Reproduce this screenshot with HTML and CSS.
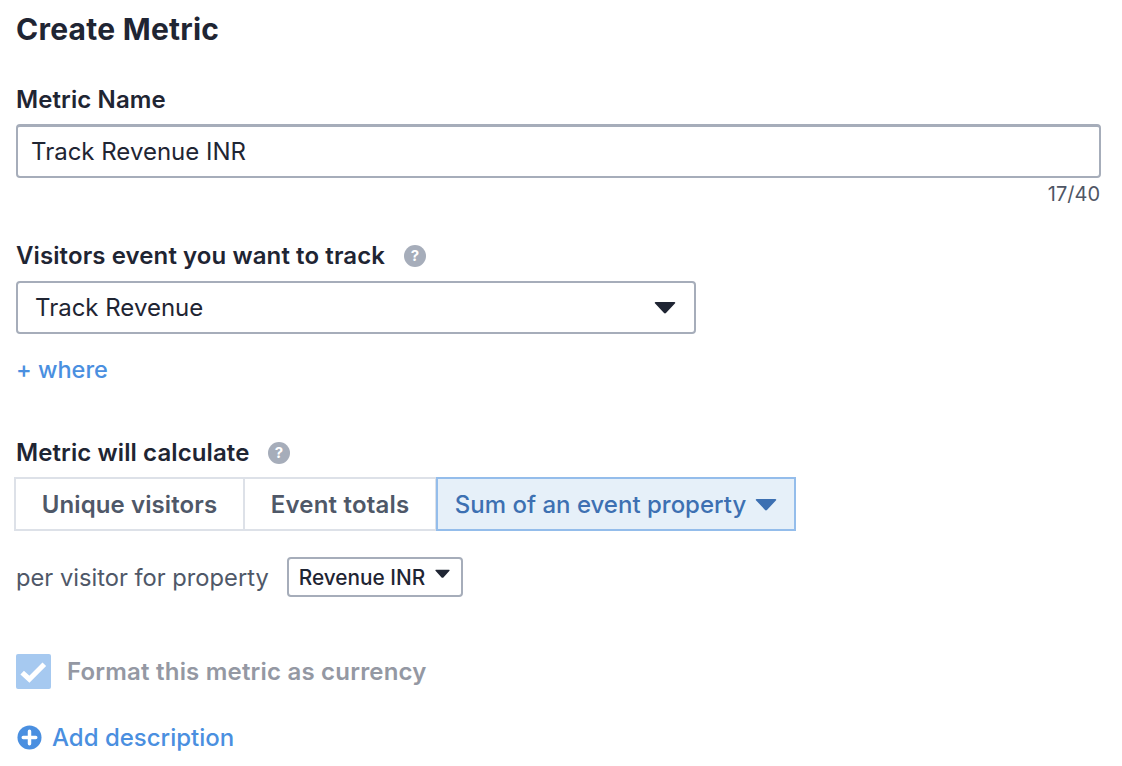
FILE: index.html
```html
<!DOCTYPE html>
<html lang="en">
<head>
<meta charset="utf-8">
<title>Create Metric</title>
<link rel="stylesheet" href="styles.css">
</head>
<body>
<main class="page">
  <h1 class="title">Create Metric</h1>

  <label class="label name-label">Metric Name</label>
  <div class="text-input">Track Revenue INR</div>
  <div class="counter">17/40</div>

  <div class="label help-row event-label">
    <span>Visitors event you want to track</span>
    <svg class="help" viewBox="0 0 22 22" aria-hidden="true"><circle cx="11" cy="11" r="11" fill="#a6adba"/><text x="11" y="16" text-anchor="middle" class="help-mark">?</text></svg>
  </div>
  <div class="select">
    <span>Track Revenue</span>
    <svg class="caret" viewBox="0 0 22 13" aria-hidden="true"><path d="M1.5 1h19a.8.8 0 0 1 .6 1.3l-8.9 9.4a1.6 1.6 0 0 1-2.4 0L.9 2.3A.8.8 0 0 1 1.5 1z" fill="#1f2533"/></svg>
  </div>
  <div class="where">+ where</div>

  <div class="label help-row calc-label">
    <span>Metric will calculate</span>
    <svg class="help" viewBox="0 0 22 22" aria-hidden="true"><circle cx="11" cy="11" r="11" fill="#a6adba"/><text x="11" y="16" text-anchor="middle" class="help-mark">?</text></svg>
  </div>
  <div class="tabs">
    <div class="tab tab-unique">Unique visitors</div>
    <div class="tab tab-totals">Event totals</div>
    <div class="tab tab-active">
      <span>Sum of an event property</span>
      <svg class="caret" viewBox="0 0 22 13" aria-hidden="true"><path d="M1.5 1h19a.8.8 0 0 1 .6 1.3l-8.9 9.4a1.6 1.6 0 0 1-2.4 0L.9 2.3A.8.8 0 0 1 1.5 1z" fill="#3d70b2"/></svg>
    </div>
  </div>

  <div class="property-row">
    <span class="property-text">per visitor for property</span>
    <div class="mini-select">
      <span>Revenue INR</span>
      <svg class="mini-caret" viewBox="0 0 16 10" aria-hidden="true"><path d="M1 .5h14a.6.6 0 0 1 .45 1L9 8.6a1.4 1.4 0 0 1-2 0L.55 1.5A.6.6 0 0 1 1 .5z" fill="#1f2533"/></svg>
    </div>
  </div>

  <div class="check-row">
    <span class="checkbox">
      <svg viewBox="0 0 34 34" aria-hidden="true"><path d="M6 18l7 6.5L27.5 10" fill="none" stroke="#fff" stroke-width="5"/></svg>
    </span>
    <span class="check-text">Format this metric as currency</span>
  </div>

  <div class="add-row">
    <svg class="plus" viewBox="0 0 26 26" aria-hidden="true"><circle cx="13" cy="13" r="12.5" fill="#4a8fe0"/><path d="M13 6.5v13M6.5 13h13" stroke="#fff" stroke-width="3.6" stroke-linecap="round"/></svg>
    <span>Add description</span>
  </div>
</main>
</body>
</html>
```

FILE: styles.css
```css
* { box-sizing: border-box; }
html, body { margin: 0; padding: 0; background: #fff; }
body {
  width: 1122px;
  height: 766px;
  overflow: hidden;
  font-family: "Inter", "Liberation Sans", sans-serif;
  color: #1f2533;
}
.page { padding: 0 21px 0 16px; display: flex; flex-direction: column; align-items: flex-start; }
.title { margin: 11px 0 0 0; font-size: 30px; line-height: 36px; font-weight: 700; letter-spacing: 0.25px; }
.label { font-size: 24px; line-height: 30px; font-weight: 600; display: block; margin-left: 0; letter-spacing: 0.1px; }
.name-label { margin-top: 38px; }
.text-input {
  width: 1085px; height: 54px; margin-top: 9px;
  border: 2px solid #a6adba; border-top-width: 3px; border-radius: 4px;
  padding-left: 13px; font-size: 24px; line-height: 49px;
}
.counter { width: 1085px; text-align: right; font-size: 20px; line-height: 28px; color: #4f5665; margin-top: 2px; padding-right: 1px; }
.help-row { display: flex; align-items: center; gap: 19px; }
.event-label { margin-top: 33px; }
.help { width: 22px; height: 22px; flex: none; }
.help-mark { font-size: 15px; font-weight: 700; fill: #fff; }
.select {
  width: 680px; height: 53px; margin-top: 10px;
  border: 2px solid #a6adba; border-radius: 4px;
  padding: 0 18px 0 17px; display: flex; align-items: center; justify-content: space-between;
  font-size: 24px;
}
.caret { width: 22px; height: 13px; flex: none; }
.where { margin: 21px 0 0 0; font-size: 23.5px; line-height: 30px; font-weight: 500; color: #4a8fe0; }
.calc-label { margin-top: 53px; }
.tabs { display: flex; margin: 9px 0 0 -2px; height: 54px; }
.tab {
  border: 2px solid #dde1e8; display: flex; align-items: center; justify-content: center;
  font-size: 24px; font-weight: 600; color: #4f5868; letter-spacing: 0.1px;
}
.tab-unique { width: 231px; }
.tab-totals { width: 194px; margin-left: -2px; letter-spacing: 0.2px; }
.tab-active {
  width: 360px; margin-left: -1px; gap: 9px; font-weight: 500; letter-spacing: 0;
  border-color: #94bdeb; background: #e6f0f9; color: #3d70b2;
}
.property-row { display: flex; align-items: center; gap: 18px; margin-top: 26px; }
.property-text { font-size: 23.7px; color: #4f5868; }
.mini-select {
  width: 176px; height: 40px; border: 2px solid #a6adba; border-radius: 4px;
  display: flex; align-items: center; gap: 10px; padding-left: 10px; font-size: 20.8px; font-weight: 500;
}
.mini-caret { width: 15px; height: 10px; flex: none; margin-top: -6px; }
.check-row { display: flex; align-items: center; gap: 16px; margin-top: 57px; }
.checkbox { width: 35px; height: 35px; border-radius: 2px; background: #a6c9f0; display: block; }
.checkbox svg { width: 35px; height: 35px; display: block; }
.check-text { font-size: 24px; font-weight: 600; color: #9498a3; letter-spacing: 0.2px; }
.add-row { display: flex; align-items: center; gap: 10px; margin: 34px 0 0 1px; font-size: 24px; font-weight: 500; color: #4a8fe0; }
.plus { width: 25px; height: 25px; flex: none; }
```
